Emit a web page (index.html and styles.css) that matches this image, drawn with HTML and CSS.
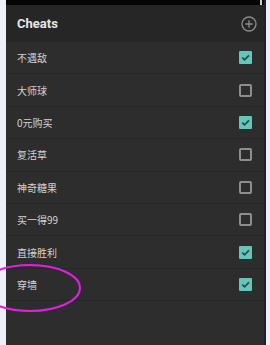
FILE: index.html
```html
<!DOCTYPE html>
<html>
<head>
<meta charset="utf-8">
<link rel="stylesheet" href="styles.css">
</head>
<body>
<div class="frame">
  <div class="screen">
    <div class="status"><span class="batt"></span></div>
    <div class="header">
      <span class="title">Cheats</span>
      <svg class="add" width="16" height="16" viewBox="0 0 16 16">
        <circle cx="8" cy="8" r="7" fill="none" stroke="#8c8c8c" stroke-width="1.3"/>
        <path d="M8 4.3V11.7M4.3 8H11.7" stroke="#8c8c8c" stroke-width="1.3"/>
      </svg>
    </div>
    <ul class="list">
      <li class="row"><span class="label">不遇敌</span><span class="box on"><svg viewBox="0 0 12 12"><path d="M3 6.2L5.1 8.2L9.2 4" fill="none" stroke="#2b4a46" stroke-width="1.6"/></svg></span></li>
      <li class="row"><span class="label">大师球</span><span class="box"></span></li>
      <li class="row"><span class="label">0元购买</span><span class="box on"><svg viewBox="0 0 12 12"><path d="M3 6.2L5.1 8.2L9.2 4" fill="none" stroke="#2b4a46" stroke-width="1.6"/></svg></span></li>
      <li class="row"><span class="label">复活草</span><span class="box"></span></li>
      <li class="row"><span class="label">神奇糖果</span><span class="box"></span></li>
      <li class="row"><span class="label">买一得99</span><span class="box"></span></li>
      <li class="row"><span class="label">直接胜利</span><span class="box on"><svg viewBox="0 0 12 12"><path d="M3 6.2L5.1 8.2L9.2 4" fill="none" stroke="#2b4a46" stroke-width="1.6"/></svg></span></li>
      <li class="row"><span class="label">穿墙</span><span class="box on"><svg viewBox="0 0 12 12"><path d="M3 6.2L5.1 8.2L9.2 4" fill="none" stroke="#2b4a46" stroke-width="1.6"/></svg></span></li>
    </ul>
  </div>
  <svg class="circle" width="90" height="60" viewBox="0 0 90 60">
    <ellipse cx="30" cy="30" rx="50" ry="23" fill="none" stroke="#e21fe0" stroke-width="2"/>
  </svg>
</div>
</body>
</html>
```

FILE: styles.css
```css
html, body {
  margin: 0;
  padding: 0;
}
body {
  width: 270px;
  height: 345px;
  background: #eef0f7;
  overflow: hidden;
  font-family: "Noto Sans CJK SC", "Noto Sans", sans-serif;
}
.frame {
  position: relative;
  display: flex;
  height: 345px;
  padding: 0 4px 0 6px;
}
.screen {
  flex: 1;
  display: flex;
  flex-direction: column;
  background: #2d2d2d;
  border-right: 2px solid #232323;
}
.status {
  height: 5px;
  background: #050505;
  display: flex;
  justify-content: flex-end;
}
.batt {
  width: 2px;
  height: 5px;
  background: #cfcfcf;
  margin-right: 2px;
}
.header {
  height: 37px;
  background: #262626;
  display: flex;
  align-items: center;
  justify-content: space-between;
  padding: 0 7px 0 11px;
}
.title {
  font-family: "Roboto", "Noto Sans", sans-serif;
  font-weight: 700;
  font-size: 13px;
  color: #e6e6e6;
}
.add {
  display: block;
}
.list {
  list-style: none;
  margin: 0;
  padding: 0;
}
.row {
  height: 31.4px;
  border-bottom: 1px solid #262626;
  display: flex;
  align-items: center;
  justify-content: space-between;
  padding: 0 12px 0 11px;
}
.label {
  font-size: 10px;
  color: #d2d2d2;
}
.box {
  width: 9px;
  height: 9px;
  border: 2px solid #8e8e8e;
  border-radius: 2px;
  display: block;
}
.box.on {
  width: 13px;
  height: 13px;
  border: none;
  border-radius: 1px;
  background: #62c6b9;
}
.box svg {
  display: block;
  width: 13px;
  height: 13px;
}
.circle {
  position: absolute;
  left: 0;
  top: 258px;
}
```
